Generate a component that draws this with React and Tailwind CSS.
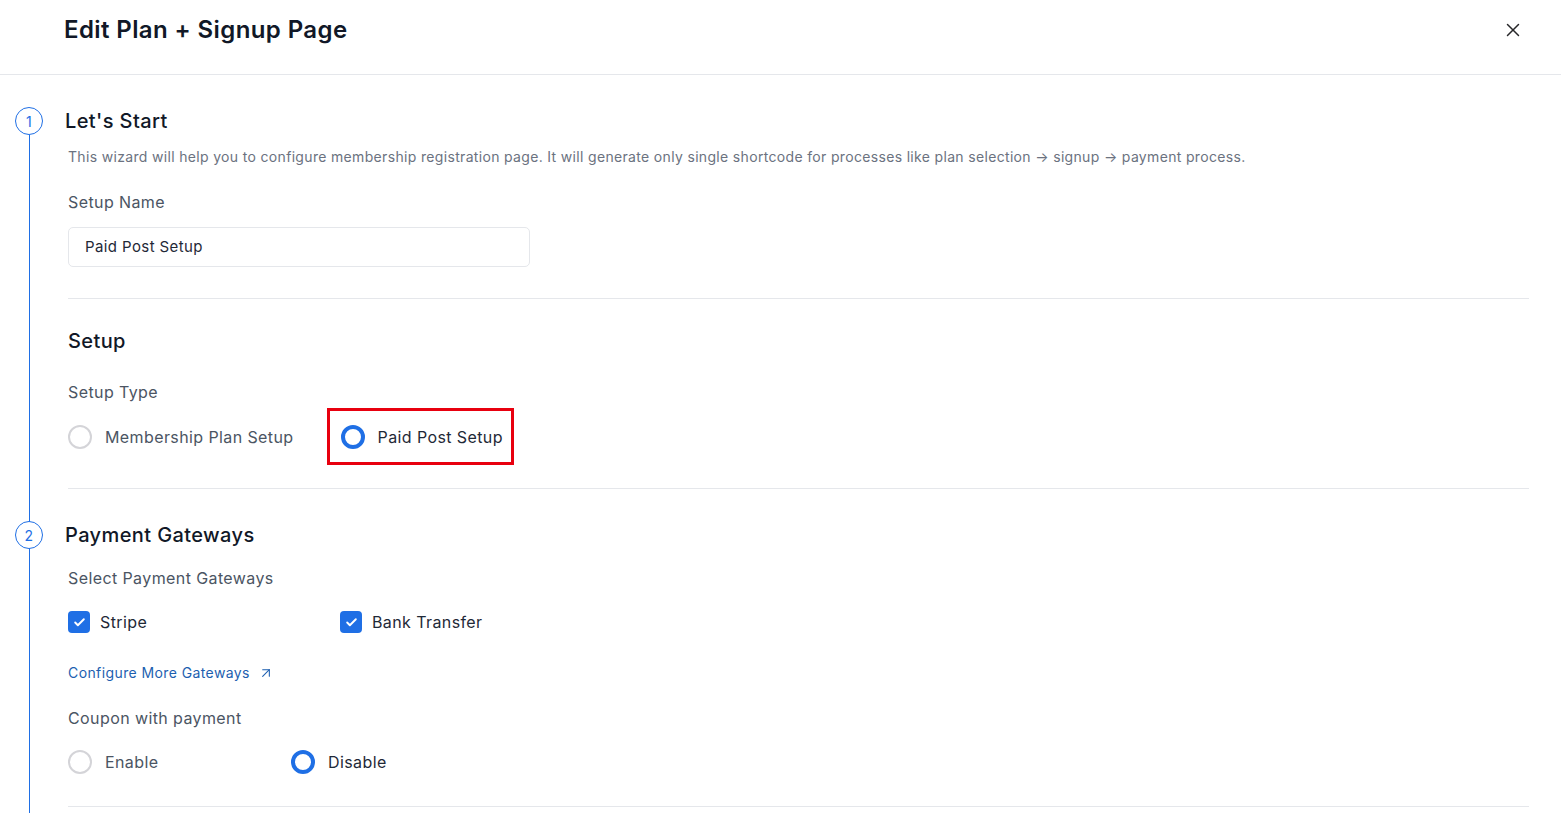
import React from 'react';
import { X, ArrowUpRight, Check } from 'lucide-react';

const font = { fontFamily: 'Inter, "Noto Sans", sans-serif' };

const Radio = ({ checked, label, className = '' }) => (
  <label className={`flex items-center gap-[13px] ${className}`}>
    {checked ? (
      <span className="w-6 h-6 rounded-full border-[4px] border-[#1f6fe5] bg-white" />
    ) : (
      <span className="w-6 h-6 rounded-full border-2 border-[#d4d4d8] bg-white" />
    )}
    <span className={`text-[16px] leading-6 ${checked ? 'text-[#1f2937]' : 'text-[#4b5563]'}`}>{label}</span>
  </label>
);

const Checkbox = ({ label, className = '' }) => (
  <label className={`flex items-center gap-[10px] ${className}`}>
    <span className="w-[22px] h-[22px] rounded-[4px] bg-[#1f6fe5] flex items-center justify-center">
      <Check size={13} strokeWidth={3.5} className="text-white" />
    </span>
    <span className="text-[16px] text-[#1f2937]">{label}</span>
  </label>
);

const StepBadge = ({ n }) => (
  <div className="relative z-10 w-[28px] h-[28px] rounded-full border border-[#1f6fe5] bg-white text-[#1f6fe5] text-[14px] flex items-center justify-center">
    {n}
  </div>
);

export default function App() {
  return (
    <div className="w-full h-[813px] bg-white overflow-hidden tracking-[0.4px] flex flex-col" style={font}>
      <header className="h-[75px] shrink-0 border-b border-[#e5e7eb] flex items-center justify-between pl-[64px] pr-[37px]">
        <h1 className="text-[24px] font-semibold text-[#111827] -mt-[14px]">Edit Plan + Signup Page</h1>
        <X size={22} strokeWidth={1.6} className="text-[#27272a] -mt-[14px]" />
      </header>

      <div className="relative flex-1 pl-[15px] pr-[32px]">
        <div className="absolute left-[29px] top-[60px] bottom-0 w-px bg-[#1f6fe5]" />

        {/* Step 1 */}
        <div className="flex items-center gap-[22px] pt-[31px]">
          <StepBadge n="1" />
          <h2 className="text-[20px] font-medium text-[#111827]">Let's Start</h2>
        </div>
        <div className="pl-[53px]">
          <p className="mt-[10px] text-[14px] text-[#6b7280] tracking-[0.33px]">
            This wizard will help you to configure membership registration page. It will generate only single shortcode for processes like plan selection → signup → payment process.
          </p>
          <div className="mt-[23px] text-[16px] text-[#4b5563]">Setup Name</div>
          <div className="mt-[13px] w-[462px] h-[40px] border border-[#e5e7eb] rounded-[5px] flex items-center px-[16px] text-[15px] text-[#1f2937]">
            Paid Post Setup
          </div>
          <div className="mt-[31px] h-px bg-[#e5e7eb]" />

          <h2 className="mt-[27px] text-[20px] font-medium text-[#111827]">Setup</h2>
          <div className="mt-[24px] text-[16px] text-[#4b5563]">Setup Type</div>
          <div className="mt-[4px] flex items-center">
            <Radio label="Membership Plan Setup" />
            <div className="ml-[33px] border-[3px] border-[#e8000f] h-[57px] flex items-center pl-[11px] pr-[8px]">
              <Radio checked label="Paid Post Setup" />
            </div>
          </div>
          <div className="mt-[23px] h-px bg-[#e5e7eb]" />
        </div>

        {/* Step 2 */}
        <div className="flex items-center gap-[22px] pt-[31px]">
          <StepBadge n="2" />
          <h2 className="text-[20px] font-medium text-[#111827]">Payment Gateways</h2>
        </div>
        <div className="pl-[53px]">
          <div className="mt-[16px] text-[16px] text-[#4b5563]">Select Payment Gateways</div>
          <div className="mt-[20px] flex items-center">
            <Checkbox label="Stripe" className="w-[272px]" />
            <Checkbox label="Bank Transfer" />
          </div>
          <a className="mt-[28px] flex items-center gap-[8px] text-[14px] text-[#1d5fb0]">
            Configure More Gateways
            <ArrowUpRight size={16} strokeWidth={1.6} />
          </a>
          <div className="mt-[23px] text-[16px] text-[#4b5563]">Coupon with payment</div>
          <div className="mt-[20px] flex items-center">
            <Radio label="Enable" className="w-[223px]" />
            <Radio checked label="Disable" />
          </div>
          <div className="mt-[32px] h-px bg-[#e5e7eb]" />
        </div>
      </div>
    </div>
  );
}
